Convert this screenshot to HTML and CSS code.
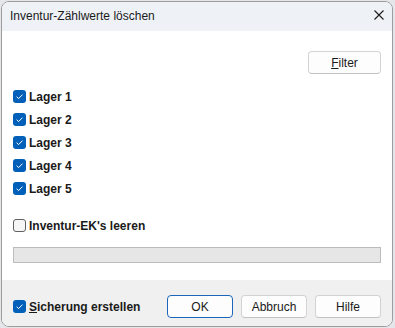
FILE: index.html
```html
<!DOCTYPE html>
<html lang="de">
<head>
<meta charset="UTF-8">
<title>Inventur-Zählwerte löschen</title>
<link rel="stylesheet" href="styles.css">
</head>
<body>
<div class="dialog">
  <div class="titlebar">
    <span class="title">Inventur-Zählwerte löschen</span>
    <svg class="close" width="10" height="10" viewBox="0 0 10 10"><path d="M0.5 0.5 L9.5 9.5 M9.5 0.5 L0.5 9.5" stroke="#1b1b1b" stroke-width="1.1" fill="none"/></svg>
  </div>
  <div class="content">
    <div class="toolbar">
      <button class="btn btn-filter"><u>F</u>ilter</button>
    </div>
    <div class="checklist">
      <label class="check-row"><span class="box checked"><svg width="13" height="13" viewBox="0 0 13 13"><path d="M3.6 6.7 L5.6 8.6 L9.5 4.6" stroke="#ffffff" stroke-width="1" fill="none"/></svg></span>Lager 1</label>
      <label class="check-row"><span class="box checked"><svg width="13" height="13" viewBox="0 0 13 13"><path d="M3.6 6.7 L5.6 8.6 L9.5 4.6" stroke="#ffffff" stroke-width="1" fill="none"/></svg></span>Lager 2</label>
      <label class="check-row"><span class="box checked"><svg width="13" height="13" viewBox="0 0 13 13"><path d="M3.6 6.7 L5.6 8.6 L9.5 4.6" stroke="#ffffff" stroke-width="1" fill="none"/></svg></span>Lager 3</label>
      <label class="check-row"><span class="box checked"><svg width="13" height="13" viewBox="0 0 13 13"><path d="M3.6 6.7 L5.6 8.6 L9.5 4.6" stroke="#ffffff" stroke-width="1" fill="none"/></svg></span>Lager 4</label>
      <label class="check-row"><span class="box checked"><svg width="13" height="13" viewBox="0 0 13 13"><path d="M3.6 6.7 L5.6 8.6 L9.5 4.6" stroke="#ffffff" stroke-width="1" fill="none"/></svg></span>Lager 5</label>
    </div>
    <label class="check-row ek-row"><span class="box"></span>Inventur-EK's leeren</label>
    <div class="progress"></div>
  </div>
  <div class="footer">
    <label class="check-row backup"><span class="box checked"><svg width="13" height="13" viewBox="0 0 13 13"><path d="M3.6 6.7 L5.6 8.6 L9.5 4.6" stroke="#ffffff" stroke-width="1" fill="none"/></svg></span><span><u>S</u>icherung erstellen</span></label>
    <div class="buttons">
      <button class="btn btn-default">OK</button>
      <button class="btn">Abbruch</button>
      <button class="btn">Hilfe</button>
    </div>
  </div>
</div>
</body>
</html>
```
FILE: styles.css
```css
body {
  margin: 0;
  background-color: #e4e6e9;
  font-family: 'Liberation Sans', Arial, sans-serif;
  font-size: 12px;
  color: #1a1a1a;
}
.dialog {
  box-sizing: border-box;
  margin: 1px 0 0 1px;
  width: 392px;
  height: 326px;
  border: 1px solid #9c9c9c;
  border-radius: 8px;
  overflow: hidden;
  background-color: #ffffff;
  display: flex;
  flex-direction: column;
}
.titlebar {
  height: 29px;
  flex: none;
  display: flex;
  align-items: center;
  padding: 0 8px;
  background-color: #eef2f7;
}
.title {
  flex: 1;
  line-height: 29px;
}
.close {
  margin-bottom: 3px;
}
.content {
  height: 249px;
  flex: none;
  box-sizing: border-box;
  padding: 20px 11px 0 11px;
}
.toolbar {
  display: flex;
  justify-content: flex-end;
}
.btn {
  box-sizing: border-box;
  width: 66px;
  height: 23px;
  padding: 0;
  font-family: inherit;
  font-size: 12px;
  color: #1a1a1a;
  background-color: #fdfdfd;
  border: 1px solid #d3d3d3;
  border-bottom-color: #c2c2c2;
  border-radius: 4px;
}
.btn-filter {
  width: 73px;
}
.btn-default {
  border-color: #1a66b8;
}
.checklist {
  margin-top: 11px;
}
.check-row {
  height: 23px;
  display: flex;
  align-items: center;
  font-weight: bold;
}
.box {
  box-sizing: border-box;
  width: 13px;
  height: 13px;
  margin-right: 3px;
  border: 1px solid #616161;
  border-radius: 3px;
  background-color: #f6f6f6;
  display: flex;
}
.box.checked {
  border: none;
  background-color: #005fb8;
}
.ek-row {
  margin-top: 14px;
}
.progress {
  margin-top: 10px;
  height: 16px;
  box-sizing: border-box;
  background-color: #e6e6e6;
  border: 1px solid #bcbcbc;
}
.footer {
  flex: 1;
  display: flex;
  align-items: flex-start;
  padding: 15px 11px 0 11px;
  background-color: #f0f0f0;
}
.backup {
  flex: 1;
}
.buttons {
  display: flex;
  gap: 8px;
}
```
